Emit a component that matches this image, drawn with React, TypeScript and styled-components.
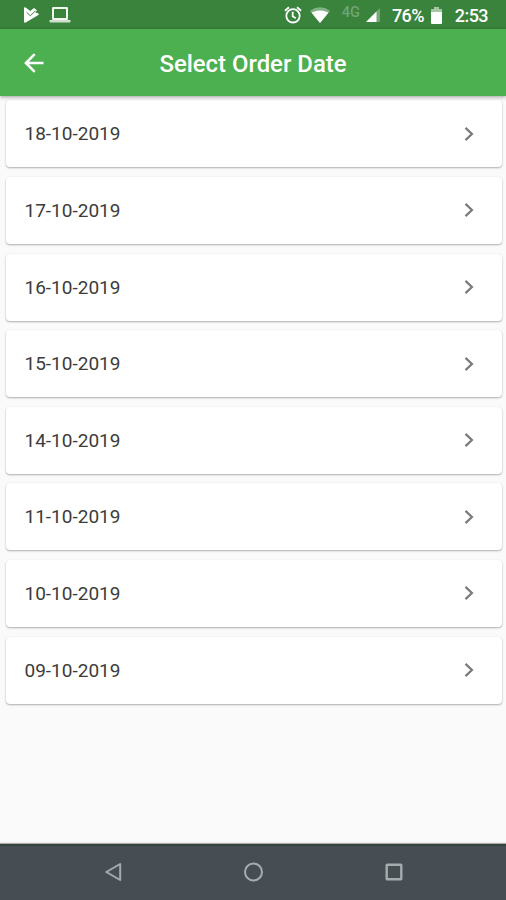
import React from 'react';
import styled, { createGlobalStyle } from 'styled-components';

const GlobalStyle = createGlobalStyle`
  * { box-sizing: border-box; }
  body { margin: 0; background: #fafafa; font-family: Roboto, sans-serif; }
  svg { display: block; flex: none; }
`;

const Screen = styled.div`
  width: 506px;
  height: 900px;
  display: flex;
  flex-direction: column;
  overflow: hidden;
  background: #fafafa;
`;

const StatusBar = styled.div`
  flex: none;
  height: 29px;
  display: flex;
  align-items: center;
  justify-content: space-between;
  padding: 1px 18px 0 22px;
  background: #3a833d;
  color: #fff;
`;

const StatusGroup = styled.div`
  display: flex;
  align-items: center;
`;

const StatusIcon = styled.svg<{ $gap?: number }>`
  margin-right: ${({ $gap = 0 }) => $gap}px;
`;

const StatusText = styled.span<{ $gap?: number }>`
  font-size: 18px;
  font-weight: 500;
  line-height: 26px;
  letter-spacing: -0.55px;
  padding-top: 1px;
  margin-right: ${({ $gap = 0 }) => $gap}px;
`;

const NetworkLabel = styled.span`
  font-size: 14.5px;
  font-weight: 500;
  line-height: 14px;
  color: #71a673;
  margin: 0 6px 5px 0;
`;

const AppBar = styled.header`
  flex: none;
  position: relative;
  z-index: 1;
  height: 67px;
  display: grid;
  grid-template-columns: 60px 1fr 60px;
  align-items: center;
  background: #4caf50;
  color: #fff;
  box-shadow: 0 1px 4px rgba(0, 0, 0, 0.38);
`;

const BackButton = styled.button`
  border: 0;
  padding: 0 0 0 24px;
  background: none;
  color: inherit;
`;

const Title = styled.h1`
  margin: 2px 0 0;
  text-align: center;
  font-size: 23.9px;
  line-height: 28px;
  font-weight: 500;
`;

const DateList = styled.main`
  flex: 1;
  display: flex;
  flex-direction: column;
  gap: 9.6px;
  padding: 4.4px 4px 0 6px;
`;

const DateCard = styled.div`
  height: 67px;
  display: flex;
  align-items: center;
  justify-content: space-between;
  padding: 0 28.5px 0 18.5px;
  border-radius: 4px;
  background: #fff;
  box-shadow: 0 1px 2px rgba(0, 0, 0, 0.3), 0 0 1px rgba(0, 0, 0, 0.08);
`;

const DateText = styled.span`
  padding-top: 1.2px;
  font-size: 19px;
  line-height: 24px;
  color: #3c3c3c;
`;

const NavBar = styled.nav`
  flex: none;
  height: 56.5px;
  display: flex;
  align-items: center;
  justify-content: space-between;
  padding: 0 102px 2px 104px;
  border-top: 2px solid #35433f;
  background: #464e53;
  box-shadow: 0 -1px 1px rgba(0, 0, 0, 0.3);
`;

const dates = [
  '18-10-2019',
  '17-10-2019',
  '16-10-2019',
  '15-10-2019',
  '14-10-2019',
  '11-10-2019',
  '10-10-2019',
  '09-10-2019',
];

export default function App() {
  return (
    <Screen>
      <GlobalStyle />
      <StatusBar>
        <StatusGroup>
          <StatusIcon $gap={9} width="18" height="18" viewBox="0 0 18 18">
            <path d="M2 2.3Q2 .7 3.6 1.6L8.3 5.1 12 1.9 15 4.2 13.2 6.3 16.4 7.5Q17.4 8.1 16.4 8.9L3.7 16.6Q2 17.2 2 15.5Z" fill="#fff" />
            <path d="m4.7 6.4 3.6 3.4 5.1-4.9" fill="none" stroke="#3a833d" strokeWidth="1" />
          </StatusIcon>
          <StatusIcon width="22" height="18" viewBox="0 0 22 18">
            <path d="M4 2h14v11H4z" fill="none" stroke="#f0f5ee" strokeWidth="2" strokeLinejoin="round" />
            <path d="M.5 14h21v1.5q0 1-1 1h-19q-1 0-1-1z" fill="#d0dfcf" />
          </StatusIcon>
        </StatusGroup>
        <StatusGroup>
          <StatusIcon $gap={8} width="18" height="18" viewBox="0 0 18 18" fill="none" stroke="#fff" strokeWidth="1.8">
            <circle cx="9" cy="9.8" r="6.7" />
            <path d="M.9 4.7 5 1.3M17.1 4.7 13 1.3M8.7 5.8v4.5l3.1 1.9" />
          </StatusIcon>
          <StatusIcon $gap={12} width="20" height="16" viewBox="0 0 20 16">
            <path d="M0 3.7Q10-3 20 3.7L10 16Z" fill="#82b183" />
            <path d="M1.5 5.7Q10 1.2 18.5 5.7L10 16Z" fill="#fff" />
          </StatusIcon>
          <NetworkLabel>4G</NetworkLabel>
          <StatusIcon $gap={12} width="14" height="14" viewBox="0 0 14 14">
            <path d="M0 14 14 0v14z" fill="#75a776" />
            <path d="M0 14 10.5 3.5V14z" fill="#fff" />
          </StatusIcon>
          <StatusText $gap={7.5}>76%</StatusText>
          <StatusIcon $gap={12.3} width="11" height="17" viewBox="0 0 11 17">
            <path d="M3 0h5v2h3v4H0V2h3z" fill="#a5c7a3" />
            <path d="M0 5h11v11q0 1-1 1H1q-1 0-1-1z" fill="#fff" />
          </StatusIcon>
          <StatusText>2:53</StatusText>
        </StatusGroup>
      </StatusBar>
      <AppBar>
        <BackButton aria-label="Back">
          <svg width="20" height="20" viewBox="0 0 20 20" fill="none" stroke="currentColor" strokeWidth="2.5">
            <path d="M19.5 10H2M10.7 1.2 1.9 10l8.8 8.8" />
          </svg>
        </BackButton>
        <Title>Select Order Date</Title>
      </AppBar>
      <DateList>
        {dates.map((date) => (
          <DateCard key={date}>
            <DateText>{date}</DateText>
            <svg width="10" height="16" viewBox="0 0 10 16" fill="none" stroke="#7c7c7c" strokeWidth="2.3">
              <path d="m1.5 1.8 6.4 6.2-6.4 6.2" />
            </svg>
          </DateCard>
        ))}
      </DateList>
      <NavBar>
        <svg width="18" height="20" viewBox="0 0 18 20" fill="none" stroke="#a6acae" strokeWidth="2">
          <path d="M16.2 2v16L2.3 10z" strokeLinejoin="round" />
        </svg>
        <svg width="20" height="20" viewBox="0 0 20 20" fill="none" stroke="#a6acae" strokeWidth="2">
          <circle cx="10.5" cy="10" r="8.5" />
        </svg>
        <svg width="20" height="20" viewBox="0 0 20 20" fill="none" stroke="#a6acae" strokeWidth="2.4">
          <rect x="2.7" y="2.7" width="14.6" height="14.6" rx=".5" />
        </svg>
      </NavBar>
    </Screen>
  );
}
